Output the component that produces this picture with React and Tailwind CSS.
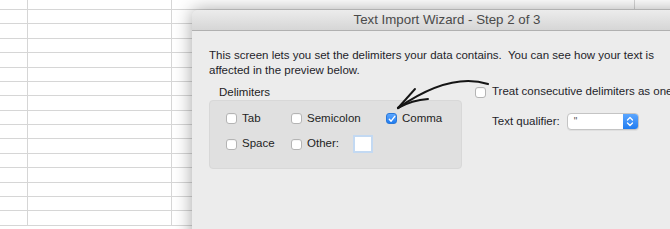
import React from "react";

const font = { fontFamily: '"Liberation Sans", Arial, sans-serif' };

function Checkbox({ checked }) {
  if (checked) {
    return (
      <div className="w-[11px] h-[11px] rounded-[3px] bg-gradient-to-b from-[#5aa6ff] to-[#1f7cf0] border border-[#2a78d8] flex items-center justify-center">
        <svg width="8" height="8" viewBox="0 0 8 8">
          <path d="M1.3 4.2 L3.1 6.2 L6.8 1.3" fill="none" stroke="white" strokeWidth="1.4" strokeLinecap="round" strokeLinejoin="round" />
        </svg>
      </div>
    );
  }
  return <div className="w-[11px] h-[11px] rounded-[3px] bg-white border border-[#b4b4b4] shadow-[inset_0_1px_0_rgba(0,0,0,0.04)]" />;
}

function Option({ label, checked }) {
  return (
    <div className="flex items-center gap-[5px]">
      <Checkbox checked={checked} />
      <span className="text-[11.5px] text-[#1e1e1e]">{label}</span>
    </div>
  );
}

function Row({ h }) {
  return (
    <div className={`flex border-b border-[#d6d6d6] box-border ${h}`}>
      <div className="w-[28px] border-r border-[#d6d6d6]" />
      <div className="w-[144px] border-r border-[#d6d6d6]" />
      <div className="w-[463px] border-r border-[#d6d6d6]" />
      <div className="flex-1" />
    </div>
  );
}

function Sheet() {
  const rows = Array.from({ length: 15 });
  return (
    <div className="flex flex-col bg-white">
      <Row h="h-[10px]" />
      {rows.map((_, i) => (
        <Row key={i} h="h-[14.38px]" />
      ))}
    </div>
  );
}

export default function App() {
  return (
    <div className="relative w-[670px] h-[229px] overflow-hidden bg-white" style={font}>
      <Sheet />
      <div className="absolute left-[192px] top-[10px] w-[510px] h-[240px] rounded-t-[6px] bg-[#ececec] shadow-[0_0_18px_rgba(0,0,0,0.36)] flex flex-col">
        <div className="h-[21px] rounded-t-[6px] bg-gradient-to-b from-[#ececec] to-[#d6d6d6] border-b border-[#b0b0b0] flex items-center justify-center">
          <span className="text-[13.3px] text-[#4a4a4a]">Text Import Wizard - Step 2 of 3</span>
        </div>
        <div className="pl-[17px] pt-[17px] flex flex-col">
          <p className="text-[11.5px] leading-[14.5px] text-[#1e1e2a] w-[470px]">
            This screen lets you set the delimiters your data contains.&nbsp; You can see how your text is affected in the preview below.
          </p>
          <div className="flex mt-[8px] gap-[13px]">
            <div className="flex flex-col">
              <span className="pl-[10px] text-[11.5px] text-[#1e1e1e] leading-[14px]">Delimiters</span>
              <div className="mt-[1px] w-[253px] h-[69px] rounded-[4px] bg-[#e0e0e0] border border-[#d8d8d8] pl-[16px] pt-[11px] grid grid-cols-[65px_95px_1fr] grid-rows-[13px_18px] gap-y-[10px] items-center">
                <Option label="Tab" />
                <Option label="Semicolon" />
                <Option label="Comma" checked />
                <Option label="Space" />
                <div className="flex items-center gap-[5px] col-span-2">
                  <Checkbox />
                  <span className="text-[11.5px] text-[#1e1e1e]">Other:</span>
                  <div className="ml-[9px] w-[20px] h-[18px] bg-white border-[2px] border-[#c3d9f2]" />
                </div>
              </div>
            </div>
            <div className="flex flex-col pt-[1px]">
              <div className="flex items-center gap-[6px] h-[12px]">
                <Checkbox />
                <span className="text-[11.5px] text-[#1e1e2a] whitespace-nowrap">Treat consecutive delimiters as one</span>
              </div>
              <div className="flex items-center mt-[15px] pl-[17px]">
                <span className="text-[11.5px] text-[#1e1e2a] whitespace-nowrap">Text qualifier:</span>
                <div className="ml-[7px] w-[72px] h-[17px] rounded-[4px] bg-white border border-[#c4c4c4] flex overflow-hidden shadow-[0_1px_0_rgba(0,0,0,0.05)]">
                  <span className="flex-1 pl-[6px] text-[10px] leading-[15px] text-[#555]">"</span>
                  <div className="w-[15px] bg-gradient-to-b from-[#5aa6ff] to-[#1f7cf0] flex items-center justify-center">
                    <svg width="8" height="11" viewBox="0 0 8 11">
                      <path d="M1.5 4 L4 1.5 L6.5 4 M1.5 7 L4 9.5 L6.5 7" fill="none" stroke="white" strokeWidth="1.3" strokeLinecap="round" strokeLinejoin="round" />
                    </svg>
                  </div>
                </div>
              </div>
            </div>
          </div>
        </div>
      </div>
      <svg className="absolute inset-0 pointer-events-none" width="670" height="229" viewBox="0 0 670 229">
        <path d="M488 84 Q450 72 398 108" fill="none" stroke="#151515" strokeWidth="2.2" strokeLinecap="round" />
        <path d="M398 108 L415 89" fill="none" stroke="#151515" strokeWidth="1.9" strokeLinecap="round" />
        <path d="M398 108 Q412 100 428 99" fill="none" stroke="#151515" strokeWidth="1.9" strokeLinecap="round" />
      </svg>
    </div>
  );
}
